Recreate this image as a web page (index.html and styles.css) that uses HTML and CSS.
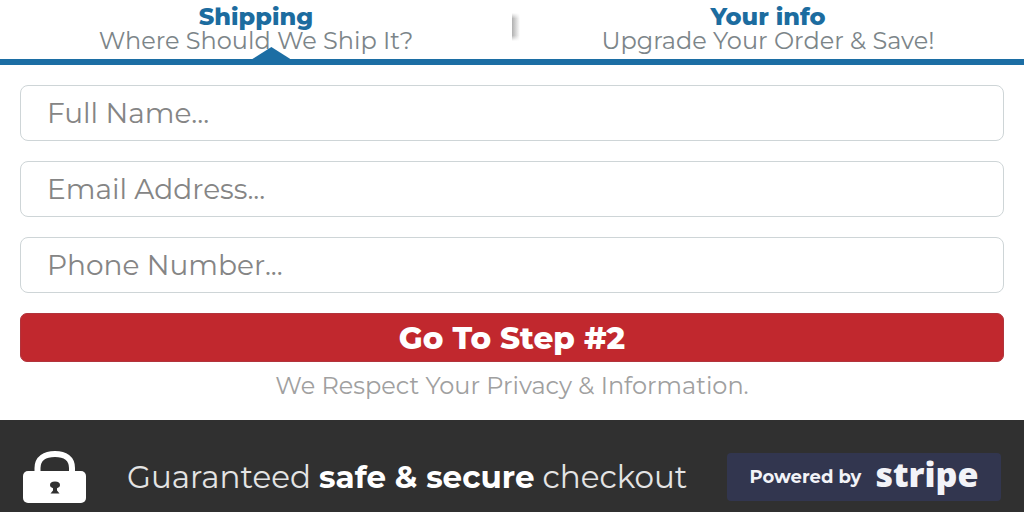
FILE: index.html
```html
<!DOCTYPE html>
<html lang="en">
<head>
<meta charset="utf-8">
<meta name="viewport" content="width=device-width, initial-scale=1">
<title>Shipping</title>
<link rel="stylesheet" href="styles.css">
</head>
<body>
<main class="page">
  <nav class="steps" aria-label="Checkout steps">
    <a class="step step-active" href="#shipping" aria-current="step">
      <strong class="step-title">Shipping</strong>
      <span class="step-note">Where Should We Ship It?</span>
    </a>
    <span class="divider" aria-hidden="true"></span>
    <a class="step" href="#info">
      <strong class="step-title">Your info</strong>
      <span class="step-note">Upgrade Your Order &amp; Save!</span>
    </a>
  </nav>
  <form class="form" id="shipping">
    <input class="field" type="text" aria-label="Full Name" placeholder="Full Name...">
    <input class="field" type="email" aria-label="Email Address" placeholder="Email Address...">
    <input class="field" type="tel" aria-label="Phone Number" placeholder="Phone Number...">
    <button class="submit" type="submit">Go To Step #2</button>
    <p class="privacy">We Respect Your Privacy &amp; Information.</p>
  </form>
  <footer class="footer">
    <svg class="lock" viewBox="0 0 64 52" aria-hidden="true">
      <path d="M14.500 23V17C14.500 7.500 22 3 32 3S49 7.500 49 17V23" fill="none" stroke="#fff" stroke-width="6"/>
      <rect x="0" y="20" width="63" height="32" rx="5" fill="#fff"/>
      <path d="M32 30.500c-3.500 0-5 1.500-5 3.500 0 1.500 1 2.500 3 3.200v2.300l-2.500 3h9l-2.500-3v-2.300c2-.7 3-1.700 3-3.200 0-2-1.500-3.500-5-3.500z" fill="#303030"/>
    </svg>
    <p class="guarantee">Guaranteed <strong>safe &amp; secure</strong> checkout</p>
    <a class="badge" href="#stripe"><span class="powered">Powered by</span><span class="brand">stripe</span></a>
  </footer>
</main>
</body>
</html>
```
FILE: styles.css
```css
* {
  box-sizing: border-box;
}

body {
  margin: 0;
  background: #fff;
  font-family: Montserrat, "DejaVu Sans", sans-serif;
}

.page {
  display: flex;
  flex-direction: column;
  min-height: 100vh;
}

.steps {
  display: flex;
  padding: 5px 0 6px;
  border-bottom: 6px solid #1c6ea4;
}

.step {
  position: relative;
  flex: 1;
  display: flex;
  flex-direction: column;
  align-items: center;
  line-height: 24px;
  text-decoration: none;
  white-space: nowrap;
}

.step-active::after {
  content: "";
  position: absolute;
  left: 53%;
  bottom: -6px;
  width: 38px;
  height: 12px;
  transform: translateX(-50%);
  background: #1c6ea4;
  clip-path: polygon(50% 0, 100% 100%, 0 100%);
}

.step-title {
  color: #1c6c9f;
  font-size: 24px;
  font-weight: 800;
}

.step-note {
  color: #7c8589;
  font-size: 24px;
}

.divider {
  width: 8px;
  height: 28px;
  margin: 8px -8px 0 0;
  background:
    linear-gradient(#fff, transparent 20%, transparent 80%, #fff),
    linear-gradient(90deg, #b0b0b0, #fff);
}

.form {
  display: flex;
  flex-direction: column;
  gap: 20px;
  padding: 20px 20px 22px;
}

.field {
  width: 100%;
  height: 56px;
  padding: 0 26px;
  border: 1px solid #ced5d7;
  border-radius: 8px;
  background: #fff;
  color: #555;
  font: inherit;
  font-size: 28px;
}

.field::placeholder {
  color: #858585;
  opacity: 1;
}

.submit {
  height: 49px;
  border: 1px solid #b1343c;
  border-radius: 7px;
  background: #c1282e;
  color: #fff;
  font: inherit;
  font-size: 31px;
  font-weight: 800;
  line-height: 36px;
}

.privacy {
  margin: -8px 0 0;
  color: #a0a0a0;
  font-size: 24px;
  line-height: 24px;
  text-align: center;
}

.footer {
  flex: 1;
  display: flex;
  align-items: center;
  padding: 22px 23px 0;
  background: #303030;
}

.lock {
  flex: none;
  width: 64px;
  height: 52px;
}

.guarantee {
  flex: 1;
  margin: 0 0 0 40px;
  color: #e4e4e4;
  font-size: 31px;
  line-height: 36px;
  white-space: nowrap;
}

.guarantee strong {
  color: #fff;
}

.badge {
  display: flex;
  align-items: center;
  justify-content: center;
  gap: 14px;
  width: 274px;
  height: 48px;
  border-radius: 4px;
  background: #32364f;
  color: #f2f3f8;
  text-decoration: none;
}

.powered {
  font-size: 18px;
  font-weight: 700;
}

.brand {
  margin-top: -6px;
  font-family: "Open Sans", sans-serif;
  font-size: 34px;
  font-weight: 800;
  line-height: 40px;
}
```
